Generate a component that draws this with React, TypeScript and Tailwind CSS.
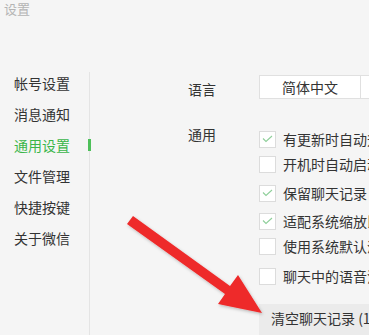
import React from "react";

const menu = ["帐号设置", "消息通知", "通用设置", "文件管理", "快捷按键", "关于微信"];

const options = [
  { label: "有更新时自动升级", checked: true, mt: "mt-0" },
  { label: "开机时自动启动", checked: false, mt: "mt-[5px]" },
  { label: "保留聊天记录", checked: true, mt: "mt-[9px]" },
  { label: "适配系统缩放比例", checked: true, mt: "mt-[8px]" },
  { label: "使用系统默认浏览器打开网页", checked: false, mt: "mt-[5px]" },
  { label: "聊天中的语音消息转成文字", checked: false, mt: "mt-[10px]" },
];

function Checkbox({ checked }: { checked: boolean }) {
  return (
    <div className="w-[17px] h-[17px] shrink-0 bg-white border border-[#dcdcdc] flex items-center justify-center">
      {checked && (
        <svg width="11" height="8" viewBox="0 0 11 8">
          <polyline points="1,3.5 4,6.5 10,1" fill="none" stroke="#8fcf9a" strokeWidth="1.1" />
        </svg>
      )}
    </div>
  );
}

export default function App() {
  return (
    <div
      className="relative w-[369px] h-[335px] overflow-hidden bg-[#f5f5f5] text-[#333] whitespace-nowrap"
      style={{ fontFamily: '"Noto Sans CJK SC", "Noto Sans", sans-serif' }}
    >
      <div className="h-[72px] pl-[4px] pt-[1px] text-[13px] leading-[16px] text-[#b4b4b4]">设置</div>
      <div className="flex h-[263px]">
        {/* 左侧菜单 */}
        <aside className="w-[90px] shrink-0 border-r border-[#e4e4e4] pl-[14px] pt-[1px] flex flex-col gap-[11px]">
          {menu.map((m) => (
            <div
              key={m}
              className={`relative text-[14px] leading-[20px] ${m === "通用设置" ? "text-[#3ab54a]" : "text-[#333]"}`}
            >
              {m}
              {m === "通用设置" && (
                <span className="absolute right-[-2px] top-[4px] w-[3px] h-[12px] bg-[#4ec05a]" />
              )}
            </div>
          ))}
        </aside>

        {/* 右侧设置 */}
        <div className="flex-1 pl-[98px] pt-[3px] text-[14px]">
          <div className="flex items-center">
            <div className="w-[71px] leading-[20px] pt-[4px]">语言</div>
            <div className="flex h-[24px] bg-white border border-[#e0e0e0]">
              <div className="w-[101px] border-r border-[#e0e0e0] flex items-center justify-center leading-[20px]">
                简体中文
              </div>
              <div className="w-[30px]" />
            </div>
          </div>

          <div className="flex mt-[30px]">
            <div className="w-[71px] leading-[20px] -mt-[5px]">通用</div>
            <div className="flex flex-col">
              {options.map((o) => (
                <div key={o.label} className={`flex items-center gap-[7px] h-[20px] ${o.mt}`}>
                  <Checkbox checked={o.checked} />
                  <span className="leading-[20px] -mt-[1px]">{o.label}</span>
                </div>
              ))}
              <div className="mt-[18px] h-[40px] bg-[#ebebeb] pl-[12px] pt-[4px] leading-[20px]">
                清空聊天记录 (1.2G)
              </div>
            </div>
          </div>
        </div>
      </div>

      {/* 红色箭头标注 */}
      <svg className="absolute left-0 top-0 pointer-events-none" width="369" height="335">
        <defs>
          <filter id="sh" x="-20%" y="-20%" width="140%" height="140%">
            <feDropShadow dx="1" dy="1.5" stdDeviation="1.5" floodColor="#000" floodOpacity="0.25" />
          </filter>
        </defs>
        <polygon
          points="133,216 230,286 238,275 262,313 218,304 225,294 127,224"
          fill="#ee2a2a"
          filter="url(#sh)"
        />
      </svg>
    </div>
  );
}
